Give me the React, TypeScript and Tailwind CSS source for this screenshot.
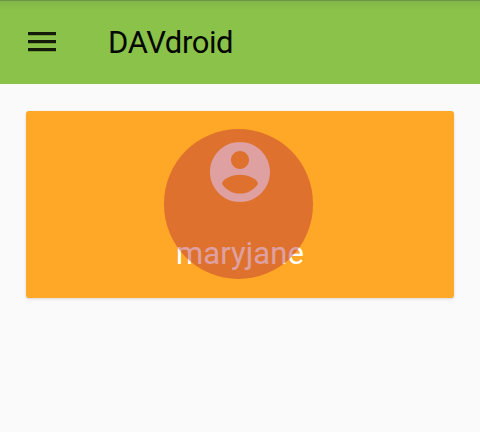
function Toolbar() {
  return (
    <header className="flex h-[84px] items-center border-t border-[#6f9646] bg-[#8bc34a] bg-[linear-gradient(to_bottom,#82b548_0px,#8bc34a_9px)] pl-[28px]">
      <svg className="mb-[2px] h-[22px] w-[28px] shrink-0" viewBox="0 0 28 22" fill="#121c07" aria-label="Menu">
        <rect x="0" y="1" width="28" height="3.2" />
        <rect x="0" y="9" width="28" height="3.2" />
        <rect x="0" y="17" width="28" height="3.2" />
      </svg>
      <h1 className="ml-[52px] text-[31px] leading-[36px] font-normal tracking-[-0.4px] text-[#050802]">DAVdroid</h1>
    </header>
  );
}

function AccountCard() {
  return (
    <section className="relative flex h-[187px] flex-col items-center rounded-[3px] bg-[#ffa726] pt-[25px] text-white shadow-[0_1px_3px_rgba(0,0,0,0.14)]">
      <svg className="size-[72px]" viewBox="0 0 24 24" fill="currentColor" aria-hidden="true">
        <path d="M12 2C6.48 2 2 6.48 2 12s4.48 10 10 10 10-4.48 10-10S17.52 2 12 2zm0 3c1.66 0 3 1.34 3 3s-1.34 3-3 3-3-1.34-3-3 1.34-3 3-3zm0 14.2c-2.5 0-4.71-1.28-6-3.22.03-1.99 4-3.08 6-3.08 1.99 0 5.97 1.09 6 3.08-1.29 1.94-3.5 3.22-6 3.22z" />
      </svg>
      <span className="mt-[28px] text-[31px] leading-[36px] tracking-[0.1px]">maryjane</span>
      <span className="absolute top-[18px] left-[137.5px] size-[149.5px] rounded-full bg-[rgba(185,53,53,0.47)]" />
    </section>
  );
}

export default function App() {
  return (
    <div className="h-[432px] w-[480px] overflow-hidden bg-[#fafafa] font-[Roboto,sans-serif]">
      <Toolbar />
      <main className="px-[26px] pt-[27px]">
        <AccountCard />
      </main>
    </div>
  );
}
